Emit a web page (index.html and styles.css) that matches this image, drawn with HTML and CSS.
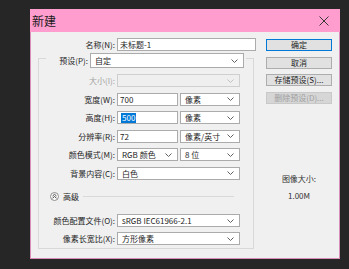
FILE: index.html
```html
<!DOCTYPE html>
<html lang="zh-CN">
<head>
    <meta charset="UTF-8">
    <meta name="viewport" content="width=device-width, initial-scale=1.0">
    <title>新建</title>
    <link rel="stylesheet" href="styles.css">
</head>
<body>
    <div class="dialog">
        <div class="titlebar">
            <span class="title">新建</span>
            <svg class="close" width="10" height="10" viewBox="0 0 10 10">
                <path d="M0.5 0.5 L9.5 9.5 M9.5 0.5 L0.5 9.5"/>
            </svg>
        </div>

        <div class="dialog-body">
            <div class="main">
                <div class="name-row">
                    <label class="label">名称(N):</label>
                    <div class="textbox name-box">未标题-1</div>
                </div>

                <div class="group">
                    <div class="preset-row">
                        <label class="label preset-label">预设(P):</label>
                        <div class="combo preset-combo">
                            <span>自定</span>
                            <svg class="chev" width="7" height="4" viewBox="0 0 7 4"><polyline points="0.5,0.5 3.5,3.5 6.5,0.5"/></svg>
                        </div>
                    </div>

                    <div class="fields">
                        <label class="label disabled">大小(I):</label>
                        <div class="combo is-disabled">
                            <span></span>
                            <svg class="chev" width="7" height="4" viewBox="0 0 7 4"><polyline points="0.5,0.5 3.5,3.5 6.5,0.5"/></svg>
                        </div>

                        <label class="label">宽度(W):</label>
                        <div class="pair">
                            <div class="textbox">700</div>
                            <div class="combo">
                                <span>像素</span>
                                <svg class="chev" width="7" height="4" viewBox="0 0 7 4"><polyline points="0.5,0.5 3.5,3.5 6.5,0.5"/></svg>
                            </div>
                        </div>

                        <label class="label">高度(H):</label>
                        <div class="pair">
                            <div class="textbox"><span class="selected">500</span></div>
                            <div class="combo">
                                <span>像素</span>
                                <svg class="chev" width="7" height="4" viewBox="0 0 7 4"><polyline points="0.5,0.5 3.5,3.5 6.5,0.5"/></svg>
                            </div>
                        </div>

                        <label class="label">分辨率(R):</label>
                        <div class="pair">
                            <div class="textbox">72</div>
                            <div class="combo">
                                <span>像素/英寸</span>
                                <svg class="chev" width="7" height="4" viewBox="0 0 7 4"><polyline points="0.5,0.5 3.5,3.5 6.5,0.5"/></svg>
                            </div>
                        </div>

                        <label class="label">颜色模式(M):</label>
                        <div class="pair">
                            <div class="combo">
                                <span>RGB 颜色</span>
                                <svg class="chev" width="7" height="4" viewBox="0 0 7 4"><polyline points="0.5,0.5 3.5,3.5 6.5,0.5"/></svg>
                            </div>
                            <div class="combo">
                                <span>8 位</span>
                                <svg class="chev" width="7" height="4" viewBox="0 0 7 4"><polyline points="0.5,0.5 3.5,3.5 6.5,0.5"/></svg>
                            </div>
                        </div>

                        <label class="label">背景内容(C):</label>
                        <div class="combo">
                            <span>白色</span>
                            <svg class="chev" width="7" height="4" viewBox="0 0 7 4"><polyline points="0.5,0.5 3.5,3.5 6.5,0.5"/></svg>
                        </div>
                    </div>

                    <div class="advanced">
                        <svg class="toggle" width="9" height="9" viewBox="0 0 9 9">
                            <circle cx="4.5" cy="4.5" r="4"/>
                            <polyline points="2.5,4 4.5,2.3 6.5,4"/>
                            <polyline points="2.5,6.2 4.5,4.5 6.5,6.2"/>
                        </svg>
                        <span>高级</span>
                        <div class="rule"></div>
                    </div>

                    <div class="fields fields-advanced">
                        <label class="label">颜色配置文件(O):</label>
                        <div class="combo">
                            <span>sRGB IEC61966-2.1</span>
                            <svg class="chev" width="7" height="4" viewBox="0 0 7 4"><polyline points="0.5,0.5 3.5,3.5 6.5,0.5"/></svg>
                        </div>

                        <label class="label">像素长宽比(X):</label>
                        <div class="combo">
                            <span>方形像素</span>
                            <svg class="chev" width="7" height="4" viewBox="0 0 7 4"><polyline points="0.5,0.5 3.5,3.5 6.5,0.5"/></svg>
                        </div>
                    </div>
                </div>
            </div>

            <div class="side">
                <button class="button default" type="button">确定</button>
                <button class="button" type="button">取消</button>
                <button class="button" type="button">存储预设(S)...</button>
                <button class="button" type="button" disabled>删除预设(D)...</button>

                <div class="image-size">
                    <div>图像大小:</div>
                    <div>1.00M</div>
                </div>
            </div>
        </div>
    </div>
</body>
</html>
```

FILE: styles.css
```css
:root {
    --desk: #262626;
    --title-pink: #fe9dce;
    --frame: #d88db6;
    --face: #f0f0f0;
    --text: #1e1e1e;
    --line: #d9d9d9;
    --field-border: #ababab;
    --accent: #0078d7;
}

* {
    margin: 0;
    padding: 0;
    box-sizing: border-box;
}

body {
    background: var(--desk);
    font-family: "Noto Sans CJK SC", "Noto Sans", sans-serif;
    font-size: 8px;
    color: var(--text);
}

/* Window */
.dialog {
    width: 310px;
    height: 250px;
    margin: 9px 0 0 30px;
    background: var(--face);
    border: 1px solid var(--frame);
    border-top: none;
    display: flex;
    flex-direction: column;
}

.titlebar {
    height: 23px;
    margin: 0 -1px;
    padding: 0 11px 0 2px;
    background: var(--title-pink);
    display: flex;
    justify-content: space-between;
    align-items: center;
}

.title {
    font-size: 12px;
    line-height: 23px;
    color: #1a1a1a;
}

.close path {
    stroke: #3a3a3a;
    stroke-width: 1;
    fill: none;
}

.dialog-body {
    flex: 1;
    display: flex;
}

/* Left part */
.main {
    width: 235px;
}

.name-row {
    margin: 6px 0 0 8px;
    display: flex;
    gap: 2px;
    height: 13px;
}

.label {
    width: 76px;
    text-align: right;
    line-height: 13px;
    white-space: nowrap;
}

.label.disabled {
    color: #a3a3a3;
}

.textbox,
.combo {
    height: 13px;
    line-height: 11px;
    background: #fff;
    border: 1px solid var(--field-border);
    white-space: nowrap;
    overflow: hidden;
}

.textbox {
    padding-left: 2px;
}

.name-box {
    width: 139px;
}

.combo {
    display: flex;
    justify-content: space-between;
    align-items: center;
    padding: 0 5px 0 4px;
}

.chev polyline {
    fill: none;
    stroke: #606060;
    stroke-width: 1;
}

.combo.is-disabled {
    background: #efefef;
    border-color: #cfcfcf;
}

.combo.is-disabled .chev polyline {
    stroke: #c0c0c0;
}

.selected {
    display: inline-block;
    background: var(--accent);
    color: #fff;
    line-height: 10px;
    padding: 0 1px;
    margin-left: 1px;
}

/* Group box */
.group {
    width: 216px;
    margin: 7px 0 0 7px;
    border: 1px solid var(--line);
    padding-bottom: 3px;
}

.preset-row {
    width: fit-content;
    margin: -6px 0 0 7px;
    padding: 0 2px 0 13px;
    background: var(--face);
    display: flex;
    gap: 2px;
}

.preset-label {
    width: 29px;
    line-height: 15px;
}

.preset-combo {
    width: 154px;
    height: 15px;
    line-height: 13px;
}

.fields {
    margin-top: 6px;
    display: grid;
    grid-template-columns: 76px 123px;
    grid-auto-rows: 13px;
    column-gap: 2px;
    row-gap: 5.5px;
}

.fields-advanced {
    margin-top: 12.5px;
    row-gap: 5px;
}

.pair {
    display: flex;
    gap: 2px;
}

.pair > :first-child {
    width: 61px;
}

.pair > :last-child {
    flex: 1;
}

.advanced {
    margin: 11px 19px 0 11px;
    height: 11px;
    display: flex;
    align-items: center;
    gap: 4px;
}

.advanced span {
    line-height: 11px;
}

.toggle circle {
    fill: #fdfdfd;
    stroke: #8c8c8c;
    stroke-width: 1;
}

.toggle polyline {
    fill: none;
    stroke: #444;
    stroke-width: 1;
}

.rule {
    flex: 1;
    height: 1px;
    background: var(--line);
}

/* Buttons column */
.side {
    width: 66px;
    padding-top: 7px;
    display: flex;
    flex-direction: column;
    gap: 5.5px;
}

.button {
    height: 12px;
    font-family: inherit;
    font-size: 8px;
    line-height: 10px;
    color: var(--text);
    background: #e1e1e1;
    border: 1px solid #adadad;
    white-space: nowrap;
}

.button.default {
    border-color: var(--accent);
}

.button:disabled {
    background: #d6d6d6;
    border-color: #c9c9c9;
    color: #a0a0a0;
}

.image-size {
    margin-top: 60.5px;
    text-align: center;
    line-height: 17px;
    color: #333;
}
```
